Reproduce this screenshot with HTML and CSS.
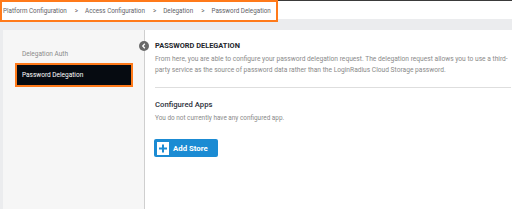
FILE: index.html
```html
<!DOCTYPE html>
<html>
<head>
<meta charset="utf-8">
<link rel="stylesheet" href="styles.css">
</head>
<body>
<header class="topbar">
  <nav class="crumbs">
    <span>Platform Configuration</span>
    <span class="sep">&gt;</span>
    <span>Access Configuration</span>
    <span class="sep">&gt;</span>
    <span>Delegation</span>
    <span class="sep">&gt;</span>
    <span>Password Delegation</span>
  </nav>
</header>
<div class="layout">
  <aside class="sidebar">
    <div class="nav-item">Delegation Auth</div>
    <div class="nav-item active">Password Delegation</div>
  </aside>
  <main class="main">
    <span class="collapse">
      <svg viewBox="0 0 10 10" width="10" height="10"><circle cx="5" cy="5" r="5" fill="#6a6a6a"/><path d="M5.8 2.8 L3.8 5 L5.8 7.2" fill="none" stroke="#fff" stroke-width="1.3"/></svg>
    </span>
    <h1 class="title">PASSWORD DELEGATION</h1>
    <p class="desc">From here, you are able to configure your password delegation request. The delegation request allows you to use a third-party service as the source of password data rather than the LoginRadius Cloud Storage password.</p>
    <hr class="divider">
    <h2 class="subtitle">Configured Apps</h2>
    <p class="note">You do not currently have any configured app.</p>
    <button class="btn">
      <span class="btn-icon"><svg viewBox="0 0 12 13" width="12" height="13"><rect width="12" height="13" fill="#fff"/><path d="M6 2.5 V10.5 M2 6.5 H10" stroke="#1b8bd3" stroke-width="2"/></svg></span>
      <span class="btn-label">Add Store</span>
    </button>
  </main>
</div>
</body>
</html>
```

FILE: styles.css
```css
html, body {
  margin: 0;
  padding: 0;
}
body {
  width: 512px;
  height: 209px;
  overflow: hidden;
  font-family: Roboto, "Liberation Sans", sans-serif;
  background: #fff;
}
.topbar {
  height: 30px;
  display: flex;
  align-items: flex-start;
  background: linear-gradient(#3a3a3a 0, #3a3a3a 1px, #fff 1px, #fff 19px, #ebecee 19px);
}
.crumbs {
  box-sizing: border-box;
  height: 22px;
  width: 278px;
  border: 2.5px solid #ff7a1a;
  background: #fff;
  display: flex;
  align-items: center;
  padding-left: 1px;
  font-size: 6.3px;
  color: #5f6368;
  white-space: nowrap;
}
.crumbs .sep {
  margin: 0 7px 0 8px;
  color: #666;
}
.layout {
  display: flex;
  height: 179px;
  background: #ebecee;
  padding-left: 3px;
}
.sidebar {
  box-sizing: border-box;
  width: 142px;
  background: #f6f6f6;
  border-right: 1px solid #cfcfcf;
  padding: 16px 11px 0 12px;
}
.nav-item {
  box-sizing: border-box;
  height: 17px;
  line-height: 16px;
  padding-left: 7px;
  font-size: 6.5px;
  color: #8a8a8a;
}
.nav-item.active {
  height: 24px;
  line-height: 20px;
  padding-left: 5px;
  background: #060b11;
  color: #fff;
  border: 2px solid #ff7a1a;
}
.main {
  position: relative;
  flex: 1;
  background: #fff;
  padding: 11px 1px 0 10px;
}
.collapse {
  position: absolute;
  left: -6px;
  top: 11px;
  width: 10px;
  height: 10px;
  display: block;
}
.collapse svg {
  display: block;
}
.title {
  margin: 0;
  font-size: 7.4px;
  line-height: 10px;
  font-weight: 700;
  color: #23262b;
}
.desc {
  margin: 2.5px 0 0;
  font-size: 6.65px;
  line-height: 11px;
  color: #8a8a8a;
}
.divider {
  margin: 11.5px 0 0;
  border: 0;
  border-top: 1px solid #dedede;
  height: 0;
}
.subtitle {
  margin: 12px 0 0;
  font-size: 7.7px;
  line-height: 10px;
  font-weight: 500;
  color: #2c313a;
}
.note {
  margin: 2.5px 0 0;
  font-size: 6.4px;
  line-height: 11px;
  color: #8a8a8a;
}
.btn {
  margin: 15.5px 0 0 -1px;
  box-sizing: border-box;
  width: 64px;
  height: 18px;
  padding: 0 0 0 3px;
  display: flex;
  align-items: center;
  border: 0;
  border-radius: 2px;
  background: #1b8bd3;
  font-family: inherit;
  cursor: pointer;
}
.btn-icon svg {
  display: block;
}
.btn-label {
  margin-left: 4px;
  font-size: 7.8px;
  font-weight: 700;
  color: #fff;
}
```
